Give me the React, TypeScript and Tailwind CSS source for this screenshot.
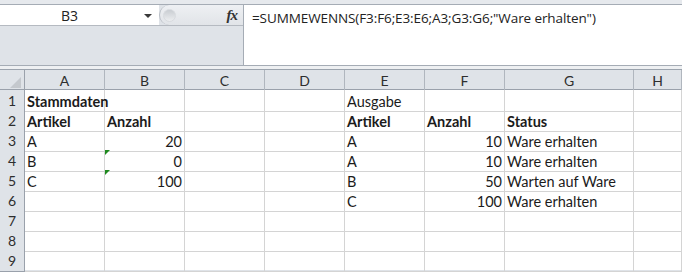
const cols = ["A", "B", "C", "D", "E", "F", "G", "H"];

type Cell = { t?: string; right?: boolean; bold?: boolean; flag?: boolean };

const rows: Cell[][] = [
  [{ t: "Stammdaten", bold: true }, {}, {}, {}, { t: "Ausgabe" }, {}, {}, {}],
  [
    { t: "Artikel", bold: true },
    { t: "Anzahl", bold: true },
    {},
    {},
    { t: "Artikel", bold: true },
    { t: "Anzahl", bold: true },
    { t: "Status", bold: true },
    {},
  ],
  [{ t: "A" }, { t: "20", right: true }, {}, {}, { t: "A" }, { t: "10", right: true }, { t: "Ware erhalten" }, {}],
  [{ t: "B" }, { t: "0", right: true, flag: true }, {}, {}, { t: "A" }, { t: "10", right: true }, { t: "Ware erhalten" }, {}],
  [{ t: "C" }, { t: "100", right: true, flag: true }, {}, {}, { t: "B" }, { t: "50", right: true }, { t: "Warten auf Ware" }, {}],
  [{}, {}, {}, {}, { t: "C" }, { t: "100", right: true }, { t: "Ware erhalten" }, {}],
  [{}, {}, {}, {}, {}, {}, {}, {}],
  [{}, {}, {}, {}, {}, {}, {}, {}],
  [{}, {}, {}, {}, {}, {}, {}, {}],
];

const gridCols = "grid grid-cols-[25px_80px_80px_80px_80px_80px_80px_129px_1fr]";

export default function App() {
  return (
    <div className="w-[682px] h-[272px] overflow-hidden bg-[#dfe3e8] font-['Lato',sans-serif] text-[#1b1b1b]">
      {/* Formula bar */}
      <div className="h-[4px] bg-[#e6e9ed]" />
      <div className="flex h-[62px] border-t border-b border-[#a5acb5]">
        <div className="w-[243px] flex flex-col">
          <div className="flex h-[21px] border-b border-[#b5bac1]">
            <div className="w-[159px] bg-white relative flex items-center justify-center text-[14px] font-['Open_Sans',sans-serif] text-[#222]">
              <span className="-ml-[20px]">B3</span>
              <span className="absolute right-[7px] top-[9px] w-0 h-0 border-l-[4px] border-r-[4px] border-t-[4px] border-l-transparent border-r-transparent border-t-[#3a3a3a]" />
            </div>
            <div className="flex-1 flex items-center rounded-l-full border-l border-[#b9bec5] bg-gradient-to-b from-[#eef0f3] to-[#e1e4e8]">
              <span className="ml-[3px] w-[13px] h-[13px] rounded-full bg-gradient-to-b from-[#c9cdd2] to-[#eceef0] border border-[#d8dbdf]" />
              <span className="ml-auto mr-[6px] italic font-['Liberation_Serif',serif] text-[15px] text-[#333] font-semibold tracking-[-1px]">
                fx
              </span>
            </div>
          </div>
          <div className="flex-1 bg-[#dfe3e8]" />
        </div>
        <div className="flex-1 bg-white border-l border-[#a5acb5] pl-[8px] pt-[4px] text-[13.5px] font-['Open_Sans',sans-serif] text-[#222] tracking-[-0.1px] leading-[18px]">
          =SUMMEWENNS(F3:F6;E3:E6;A3;G3:G6;"Ware erhalten")
        </div>
      </div>
      <div className="h-[3px] bg-[#eef0f2]" />

      {/* Sheet */}
      <div className="border-t border-[#9ba3ad]">
        <div className={`${gridCols} h-[20px] bg-[#dfe3e8] border-b border-[#9aa1ab]`}>
          <div className="relative border-r border-[#9aa1ab]">
            <span className="absolute right-[3px] bottom-[3px] w-0 h-0 border-l-[11px] border-t-[11px] border-l-transparent border-t-transparent border-b-0 border-r-0 [border-bottom:11px_solid_#c4c8cd]" />
          </div>
          {cols.map((c) => (
            <div
              key={c}
              className="border-r border-[#b0b6be] flex items-center justify-center text-[14px] text-[#2e2e2e]"
            >
              {c}
            </div>
          ))}
        </div>
        {rows.map((r, i) => (
          <div key={i} className={`${gridCols} h-[20px] bg-white`}>
            <div className="bg-[#dfe3e8] border-r border-b border-[#9aa1ab] flex items-center justify-center text-[14px] text-[#2e2e2e]">
              {i + 1}
            </div>
            {r.map((cell, j) => (
              <div
                key={j}
                className={`relative border-r border-b border-[#d4d4d4] flex items-end pb-[1px] px-[2px] text-[14.5px] leading-[17px] whitespace-nowrap ${
                  cell.right ? "justify-end" : "justify-start"
                } ${cell.bold ? "font-bold" : ""}`}
              >
                {cell.flag && (
                  <span className="absolute left-0 top-0 w-0 h-0 border-t-[5px] border-r-[5px] border-t-[#1e8a1e] border-r-transparent" />
                )}
                {cell.t}
              </div>
            ))}
          </div>
        ))}
      </div>
    </div>
  );
}
